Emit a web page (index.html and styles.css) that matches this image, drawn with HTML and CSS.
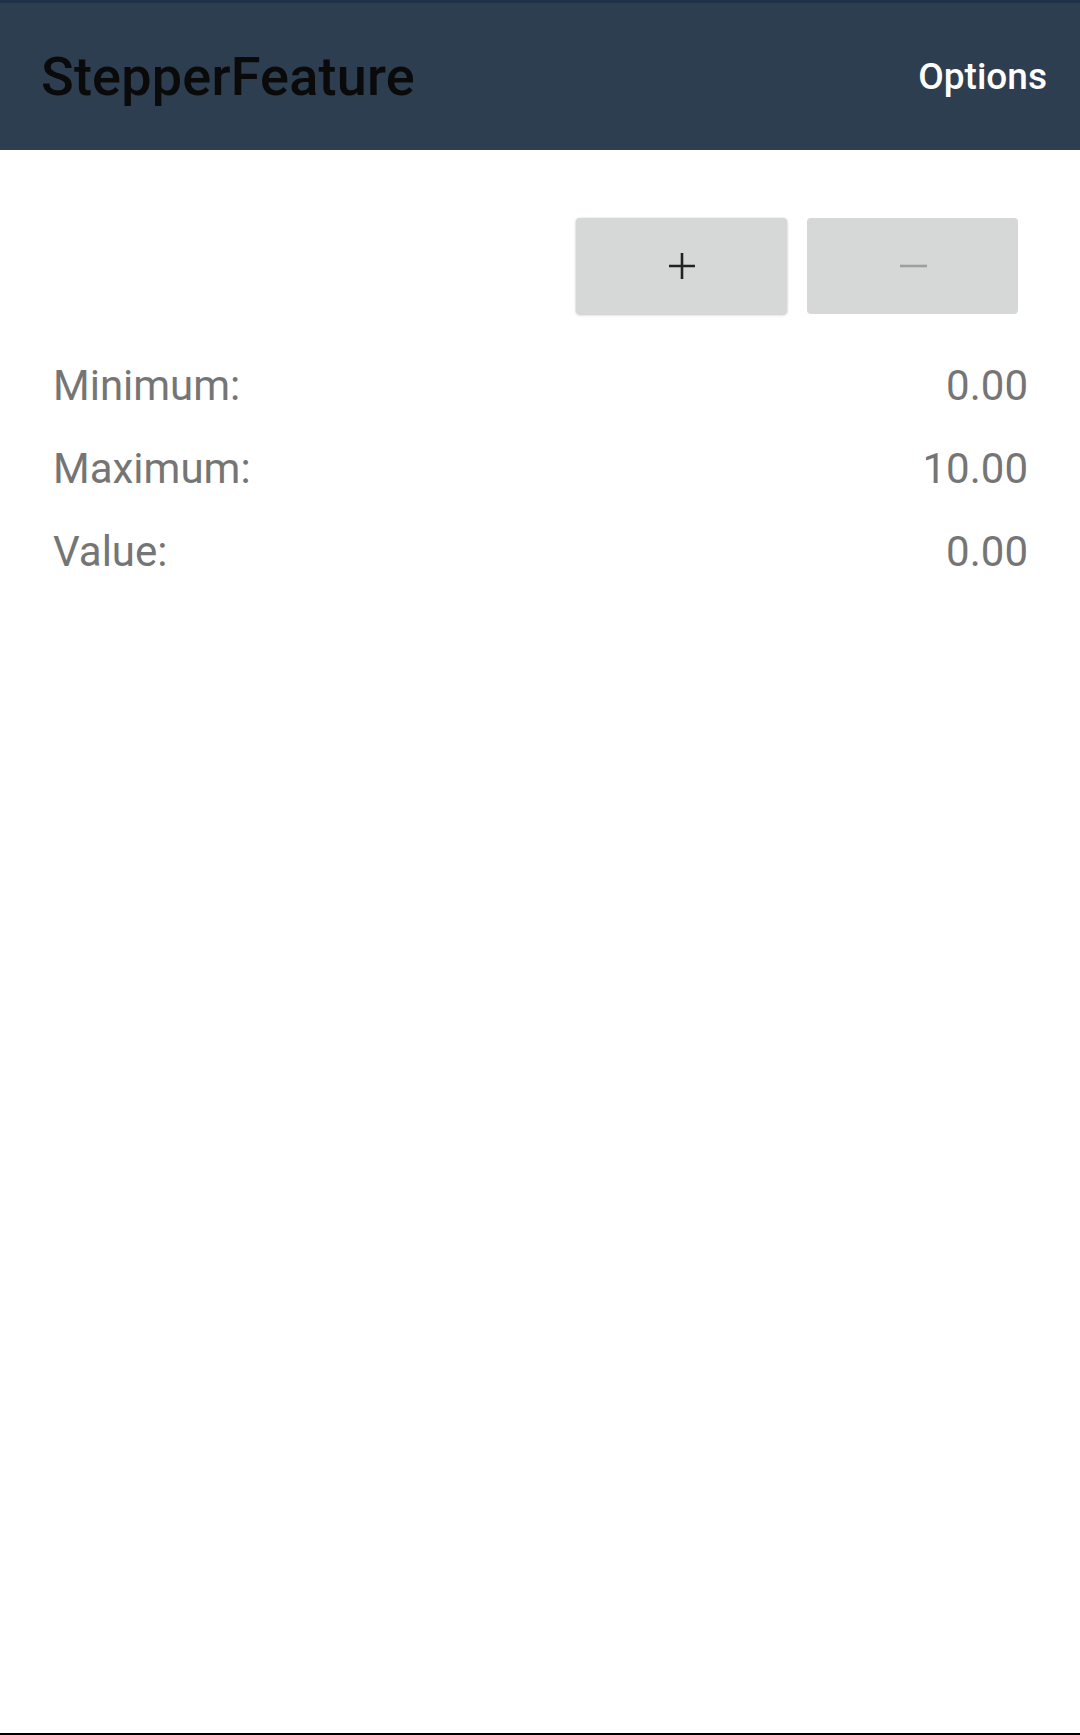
FILE: index.html
```html
<!DOCTYPE html>
<html>
<head>
<meta charset="utf-8">
<link rel="stylesheet" href="styles.css">
</head>
<body>
<div class="screen">
  <div class="statusbar"></div>
  <header class="appbar">
    <span class="title">StepperFeature</span>
    <span class="options">Options</span>
  </header>
  <main class="content">
    <div class="stepper">
      <button class="step-btn step-plus" type="button" aria-label="Increase">
        <svg width="28" height="28" viewBox="0 0 28 28"><path d="M14 1V27M1 14H27" stroke="#222" stroke-width="2.6" fill="none"/></svg>
      </button>
      <button class="step-btn step-minus" type="button" aria-label="Decrease" disabled>
        <svg width="28" height="28" viewBox="0 0 28 28"><path d="M1 14H28" stroke="#9e9e9e" stroke-width="2.6" fill="none"/></svg>
      </button>
    </div>
    <div class="rows">
      <div class="row"><span>Minimum:</span><span>0.00</span></div>
      <div class="row"><span>Maximum:</span><span>10.00</span></div>
      <div class="row"><span>Value:</span><span>0.00</span></div>
    </div>
  </main>
  <div class="navedge"></div>
</div>
</body>
</html>
```
FILE: styles.css
```css
html, body {
  margin: 0;
  padding: 0;
  background: #ffffff;
}
.screen {
  width: 1080px;
  height: 1735px;
  display: flex;
  flex-direction: column;
  font-family: Roboto, "Liberation Sans", sans-serif;
}
.statusbar {
  height: 3px;
  background: #1d3249;
}
.appbar {
  height: 147px;
  background: #2d3e50;
  display: flex;
  align-items: center;
  justify-content: space-between;
  padding: 0 33px 0 41px;
  box-sizing: border-box;
}
.title {
  font-size: 54px;
  font-weight: 500;
  color: #0a0a0a;
  letter-spacing: 0.2px;
}
.options {
  font-size: 37px;
  font-weight: 500;
  color: #ffffff;
}
.content {
  flex: 1;
  display: flex;
  flex-direction: column;
}
.stepper {
  display: flex;
  justify-content: flex-end;
  gap: 20px;
  padding: 68px 62px 0 0;
}
.step-btn {
  width: 211px;
  height: 96px;
  border: none;
  border-radius: 4px;
  background: #d6d7d7;
  display: flex;
  align-items: center;
  justify-content: center;
  padding: 0;
}
.step-plus {
  box-shadow: 0 1px 3px rgba(0, 0, 0, 0.22), 0 0 2px rgba(0, 0, 0, 0.08);
}
.rows {
  display: flex;
  flex-direction: column;
  gap: 34px;
  padding: 47px 52px 0 53px;
}
.row {
  display: flex;
  justify-content: space-between;
  font-size: 42px;
  line-height: 49px;
  color: #757575;
}
.navedge {
  height: 2px;
  background: #000000;
}
```
